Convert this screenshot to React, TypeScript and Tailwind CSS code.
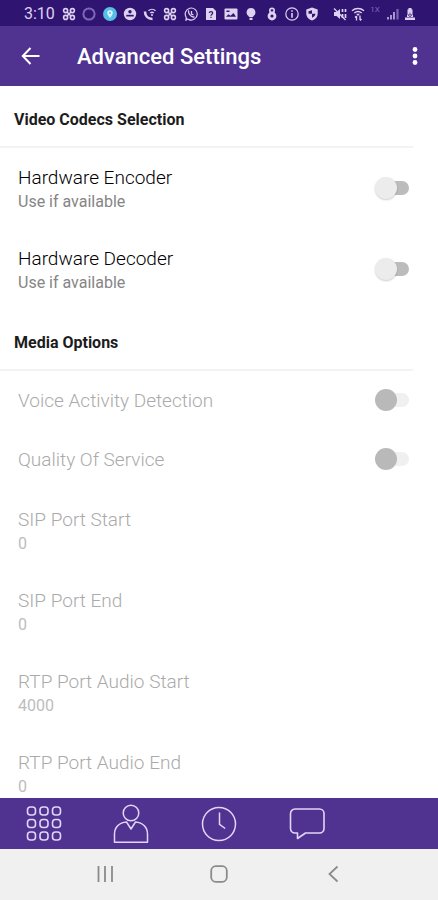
import { useState } from "react";
import type { ReactNode } from "react";

function Glyph({ children }: { children: ReactNode }) {
  return (
    <svg viewBox="0 0 14 14" className="size-[14px] shrink-0" fill="none" stroke="currentColor" strokeWidth="1.5" aria-hidden="true">
      {children}
    </svg>
  );
}

function Knot() {
  return (
    <Glyph>
      <g strokeWidth="1.6">
        <circle cx="3.6" cy="3.6" r="2" />
        <circle cx="10.4" cy="3.6" r="2" />
        <circle cx="3.6" cy="10.4" r="2" />
        <circle cx="10.4" cy="10.4" r="2" />
        <path d="M5 5l4 4M9 5l-4 4" />
      </g>
    </Glyph>
  );
}

function StatusBar() {
  return (
    <div className="flex h-[26px] shrink-0 items-center bg-[#301472] pt-0.5 pl-6 text-[#ddd3f0]">
      <time className="w-[38px] text-base leading-5">3:10</time>
      <div className="flex w-[257px] justify-between">
        <Knot />
        <Glyph>
          <circle cx="7" cy="7" r="5.6" stroke="#8067b4" strokeWidth="2" />
        </Glyph>
        <Glyph>
          <circle cx="7" cy="7" r="7" fill="#55bfe8" stroke="none" />
          <path d="M7 11C5.300 8.600 4.200 7.400 4.200 6a2.800 2.800 0 0 1 5.600 0C9.800 7.400 8.700 8.600 7 11z" fill="#d8f3fc" stroke="none" />
          <circle cx="7" cy="6" r="1" fill="#55bfe8" stroke="none" />
        </Glyph>
        <Glyph>
          <circle cx="7" cy="7" r="6.200" fill="currentColor" stroke="none" />
          <circle cx="7" cy="4.800" r="1.700" fill="#301472" stroke="none" />
          <path d="M3.300 7.800h7.400v1.700H3.300z" fill="#301472" stroke="none" />
        </Glyph>
        <Glyph>
          <path d="M2 4.500C2 9 5 12 9.500 12" strokeWidth="2.600" />
          <path d="M5.500 3.800c2-1.900 5-1.900 7 0M7.300 6c1-.9 2.500-.9 3.500 0" strokeWidth="1.400" />
          <circle cx="9" cy="8" r="1" fill="currentColor" stroke="none" />
        </Glyph>
        <Knot />
        <Glyph>
          <path d="M3 12l-1 1.300.2-3A6 6 0 1 1 5 12.600z" strokeWidth="1.200" />
          <path d="M5 3.500c-.8 1-.3 3 1.200 4.600S9.700 10.500 10.500 9.600M7.500 4v3l2 1" strokeWidth="1.300" />
        </Glyph>
        <Glyph>
          <path d="M2 1h7l3 3v9H2z" fill="currentColor" stroke="none" />
          <path d="M5.300 6c0-2 3.400-1.800 3.400 0C8.700 7.200 7 7.200 7 8.800M7 9.800v1.200" stroke="#301472" strokeWidth="1.200" />
        </Glyph>
        <Glyph>
          <rect x=".5" y="1.500" width="13" height="11" rx="1" fill="currentColor" stroke="none" />
          <path d="M2 9.800l2.500-2.500 2 1.500L9.500 6l2.500 3.800z M2.500 3.500h3v1.500h-3z" fill="#301472" stroke="none" />
        </Glyph>
        <Glyph>
          <path d="M7 1a4.400 4.400 0 0 0-2.200 8.200V10h4.400v-.8A4.400 4.400 0 0 0 7 1zM5.500 10.800h3v2.200h-3z" fill="currentColor" stroke="none" />
        </Glyph>
        <Glyph>
          <circle cx="7" cy="3.600" r="2.200" strokeWidth="1.600" />
          <circle cx="7" cy="9" r="4.400" fill="currentColor" stroke="none" />
          <circle cx="7" cy="9" r="1.600" fill="#301472" stroke="none" />
        </Glyph>
        <Glyph>
          <circle cx="7" cy="7" r="6.200" strokeWidth="1.200" />
          <path d="M7 3.300v1.500M7 6v4.700" strokeWidth="1.600" />
        </Glyph>
        <Glyph>
          <path d="M7 .5l5.700 2v4c0 3.500-2.500 6-5.700 7-3.200-1-5.700-3.500-5.700-7v-4z" fill="currentColor" stroke="none" />
          <path d="M7 3.200v3.600H3.500V4.300zM7 6.800h3.500c-.3 2-1.500 3.300-3.500 4z" fill="#301472" stroke="none" />
        </Glyph>
      </div>
      <div className="ml-[14px] flex w-[84px] items-center justify-between">
        <Glyph>
          <path d="M1 5h2.500L7 2v10L3.500 9H1z" fill="currentColor" stroke="none" />
          <path d="M1 1.500l11.500 11.500" strokeWidth="1.300" />
          <path d="M9.500 2v3M9.500 7v4M12.500 2v3M12.500 7v4" strokeWidth="1.700" />
        </Glyph>
        <Glyph>
          <path d="M1 3.800c3.500-3 8.500-3 12 0M3.300 6c2.200-1.800 5.200-1.800 7.400 0" strokeWidth="1.500" />
          <path d="M7 9L5 6.800h4z" fill="currentColor" stroke="none" />
          <path d="M5.500 9v4.500M4 10.500L5.500 9M9 8.500V13M10.500 12L9 13.500" strokeWidth="1.300" />
        </Glyph>
        <span className="w-[14px] pb-2 text-center text-[8px] leading-[10px] text-[#8067b4]">1X</span>
        <Glyph>
          <path d="M2 12.500V10M5 12.500V8M8 12.500V5" strokeWidth="2" stroke="#a896cf" />
          <path d="M11.500 12.500V2" strokeWidth="2.200" stroke="#7c64b0" />
        </Glyph>
        <Glyph>
          <path d="M5.500 1h3v1.500h1V7h-5V2.500h1zM4 7.500h6v2.500H4zM2 10.500h10V13H2z" fill="currentColor" stroke="none" />
          <path d="M7 5.500v4M5 8l2 2 2-2" stroke="#6f57a5" strokeWidth="1" />
        </Glyph>
      </div>
    </div>
  );
}

function SectionTitle({ children }: { children: ReactNode }) {
  return (
    <h2 className="flex h-[61px] items-center border-b-2 border-[#f3f3f3] pt-1.5 pl-[14px] text-base font-bold text-[#1c1c1c]">
      {children}
    </h2>
  );
}

function SwitchRow({ id, title, note, disabled }: { id: string; title: string; note?: string; disabled?: boolean }) {
  const [on, setOn] = useState(false);
  return (
    <div className={note ? "flex h-[81px] items-center justify-between pr-1 pb-0.5 pl-[18px]" : "flex h-[59px] items-center justify-between pr-1 pb-0.5 pl-[18px]"}>
      <label htmlFor={id} className={note ? "flex flex-col pt-1" : "flex flex-col pt-0.5"}>
        <span className={disabled ? "text-[19px] leading-6 font-light text-[#aaaaaa]" : "text-[19px] leading-6 font-light text-black"}>{title}</span>
        {note && <span className="text-base leading-6 text-[#858585]">{note}</span>}
      </label>
      <input
        id={id}
        type="checkbox"
        role="switch"
        checked={on}
        disabled={disabled}
        onChange={(e) => setOn(e.target.checked)}
        className="flex h-[22px] w-[34px] shrink-0 appearance-none items-center before:relative before:z-10 before:size-[22px] before:shrink-0 before:rounded-full before:bg-[#ececec] before:shadow-[0_1px_2px_rgba(0,0,0,0.2)] after:-ml-3 after:h-[14px] after:w-6 after:rounded-full after:bg-[#bcbcbc] checked:before:translate-x-3 disabled:before:bg-[#b9b9b9] disabled:before:shadow-none disabled:after:bg-[#f0f0f0]"
      />
    </div>
  );
}

function ValueRow({ title, value }: { title: string; value: string }) {
  return (
    <button type="button" disabled className="flex h-[81px] w-full flex-col items-start justify-center pt-1 pl-[18px] text-left text-[#bdbdbd]">
      <span className="text-[19px] leading-6 font-light text-[#aaaaaa]">{title}</span>
      <span className="text-base leading-6">{value}</span>
    </button>
  );
}

export default function App() {
  return (
    <div className="flex h-screen flex-col overflow-hidden bg-white font-[Roboto,sans-serif]">
      <StatusBar />
      <header className="flex h-[60px] shrink-0 items-center bg-[#503391] pr-[9px] pl-[19px] text-white">
        <button type="button" aria-label="Back">
          <svg viewBox="0 0 24 24" className="size-6" fill="none" stroke="currentColor" strokeWidth="2" aria-hidden="true">
            <path d="M20.500 12H4M11.500 4L3.800 12l7.700 8" />
          </svg>
        </button>
        <h1 className="ml-[34px] flex-1 pt-0.5 text-[22px] leading-7 font-medium">Advanced Settings</h1>
        <button type="button" aria-label="More options">
          <svg viewBox="0 0 28 24" className="h-6 w-7" fill="currentColor" aria-hidden="true">
            <circle cx="14" cy="5.500" r="2.400" />
            <circle cx="14" cy="12" r="2.400" />
            <circle cx="14" cy="18.500" r="2.400" />
          </svg>
        </button>
      </header>

      <main className="min-h-0 flex-1 overflow-hidden pt-px pr-[25px]">
        <section>
          <SectionTitle>Video Codecs Selection</SectionTitle>
          <SwitchRow id="encoder" title="Hardware Encoder" note="Use if available" />
          <SwitchRow id="decoder" title="Hardware Decoder" note="Use if available" />
        </section>
        <section>
          <SectionTitle>Media Options</SectionTitle>
          <SwitchRow id="vad" title="Voice Activity Detection" disabled />
          <SwitchRow id="qos" title="Quality Of Service" disabled />
          <ValueRow title="SIP Port Start" value="0" />
          <ValueRow title="SIP Port End" value="0" />
          <ValueRow title="RTP Port Audio Start" value="4000" />
          <ValueRow title="RTP Port Audio End" value="0" />
        </section>
      </main>

      <nav aria-label="Main" className="grid h-[51px] shrink-0 grid-cols-5 bg-[#503391] text-[#e3d5f7]">
        <button type="button" aria-label="Dialpad" className="flex items-center justify-center">
          <svg viewBox="0 0 36 40" className="h-10 w-9" fill="none" stroke="currentColor" strokeWidth="1.600" aria-hidden="true">
            {[7, 19.500, 32].map((y) =>
              [5.500, 18, 30.500].map((x) => <rect key={x + "-" + y} x={x - 4} y={y - 4} width="8" height="8" rx="3" />)
            )}
          </svg>
        </button>
        <button type="button" aria-label="Contacts" className="flex items-center justify-center">
          <svg viewBox="0 0 36 40" className="h-10 w-9" fill="none" stroke="currentColor" strokeWidth="1.500" aria-hidden="true">
            <circle cx="18" cy="9" r="7.800" />
            <path d="M13.500 18C6 18.500 1.500 23.500 1.500 30v8.300h33V30c0-6.500-4.500-11.500-12-12l-4.500 7z" strokeLinejoin="round" />
          </svg>
        </button>
        <button type="button" aria-label="Recents" className="flex items-center justify-center">
          <svg viewBox="0 0 36 40" className="h-10 w-9" fill="none" stroke="currentColor" strokeWidth="1.500" aria-hidden="true">
            <circle cx="18" cy="20" r="16.500" />
            <path d="M18.500 8.500v11.800l5.700 4.200" />
          </svg>
        </button>
        <button type="button" aria-label="Messages" className="flex items-center justify-center">
          <svg viewBox="0 0 36 40" className="h-10 w-9" fill="none" stroke="currentColor" strokeWidth="1.600" aria-hidden="true">
            <path d="M6 5h24.500a4.500 4.500 0 0 1 4.500 4.500v15a4.500 4.500 0 0 1-4.500 4.500H16.500L8.500 34.500V29H6a4.500 4.500 0 0 1-4.500-4.500v-15A4.500 4.500 0 0 1 6 5z" strokeLinejoin="round" />
          </svg>
        </button>
      </nav>

      <nav aria-label="System" className="grid h-[51px] shrink-0 grid-cols-3 bg-[#f0f0f0] px-12 text-[#8b8b8b]">
        <button type="button" aria-label="Recent apps" className="flex items-center justify-center pb-0.5">
          <svg viewBox="0 0 20 20" className="size-5" fill="none" stroke="currentColor" strokeWidth="1.800" aria-hidden="true">
            <path d="M3.500 2v16M10 2v16M17 2v16" />
          </svg>
        </button>
        <button type="button" aria-label="Home" className="flex items-center justify-center pb-0.5">
          <svg viewBox="0 0 20 20" className="size-5" fill="none" stroke="currentColor" strokeWidth="1.800" aria-hidden="true">
            <rect x="2.200" y="2.200" width="15.600" height="15.600" rx="4.500" />
          </svg>
        </button>
        <button type="button" aria-label="Back" className="flex items-center justify-center pb-0.5">
          <svg viewBox="0 0 20 20" className="size-5" fill="none" stroke="currentColor" strokeWidth="1.800" aria-hidden="true">
            <path d="M14.500 2.500L6.500 10l8 7.500" />
          </svg>
        </button>
      </nav>
    </div>
  );
}
